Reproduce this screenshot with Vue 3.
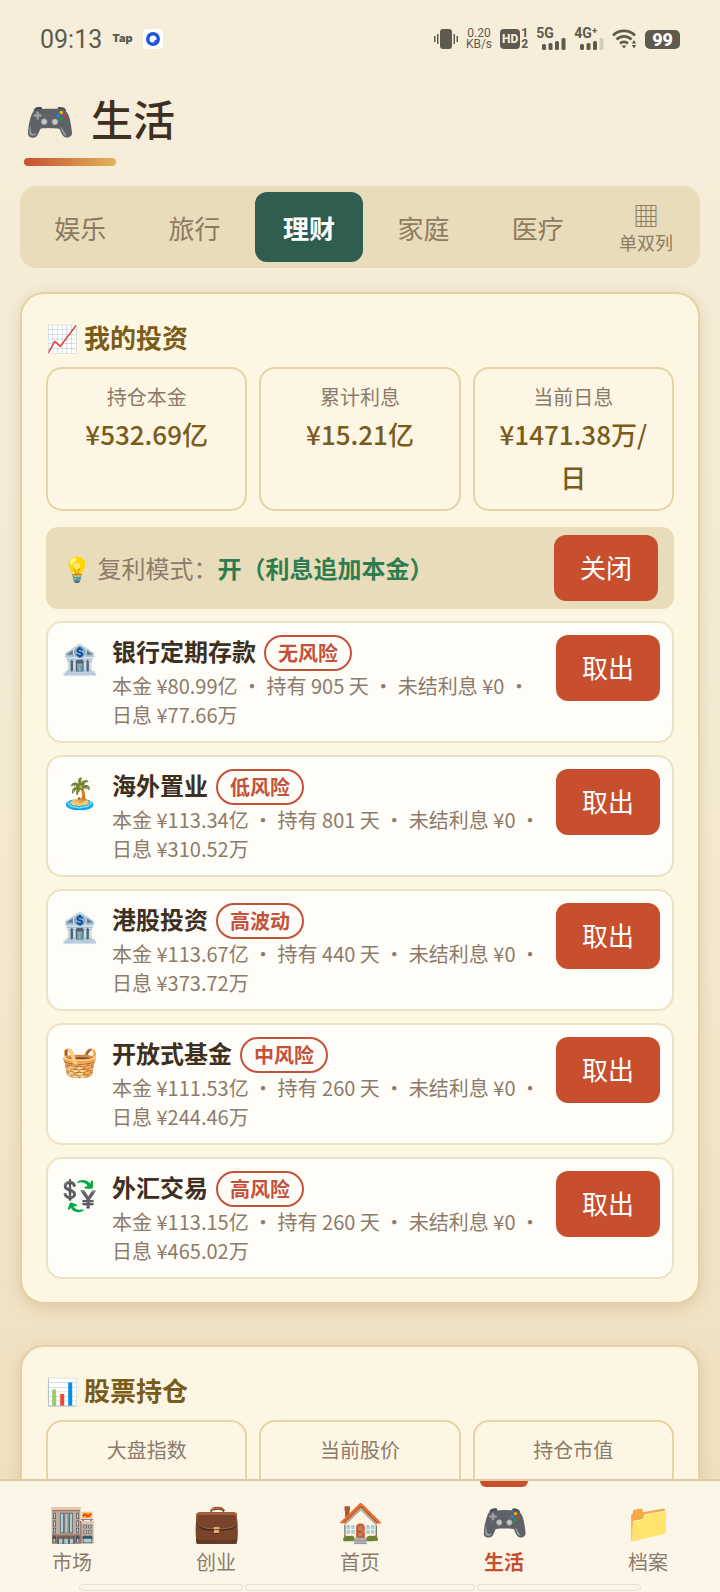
<template>
  <div class="app">
    <header class="status-bar">
      <span class="clock">09:13</span>
      <span class="tap">Tap</span>
      <svg width="20" height="20" viewBox="0 0 20 20">
        <rect width="20" height="20" rx="4" fill="#fff" />
        <circle cx="10" cy="10" r="7" fill="#1f55e0" />
        <path d="M10 6.500a3.500 3.500 0 1 0 0 7c.8 0 1.200-.4 1.200-1.100 0-.8.4-1.200 1.200-1.200.7 0 1.100-.4 1.100-1.200A3.500 3.500 0 0 0 10 6.500z" fill="#fff" />
      </svg>
      <div class="status-right">
        <svg width="24" height="22" viewBox="0 0 24 22" fill="#5e5b4e">
          <rect x="6" y="1" width="12" height="20" rx="3" />
          <rect x="0" y="8" width="1.500" height="6" />
          <rect x="3" y="6" width="1.500" height="10" />
          <rect x="19.500" y="6" width="1.500" height="10" />
          <rect x="22.500" y="8" width="1.500" height="6" />
        </svg>
        <span class="net-speed">0.20<br />KB/s</span>
        <span class="volte">
          <span class="hd">HD</span>
          <span class="hd-nums">1<br />2</span>
        </span>
        <span class="signal">
          <span class="net-type">5G</span>
          <svg width="24" height="12" viewBox="0 0 24 12" fill="#5e5b4e">
            <rect x="0" y="6" width="4" height="6" rx="1.500" />
            <rect x="6.500" y="5" width="4" height="7" rx="1.500" />
            <rect x="13" y="3" width="4" height="9" rx="1.500" />
            <rect x="19.500" y="0" width="4" height="12" rx="1.500" />
          </svg>
        </span>
        <span class="signal">
          <span class="net-type">4G⁺</span>
          <svg width="24" height="12" viewBox="0 0 24 12" fill="#5e5b4e">
            <rect x="0" y="6" width="4" height="6" rx="1.500" />
            <rect x="6.500" y="5" width="4" height="7" rx="1.500" />
            <rect x="13" y="3" width="4" height="9" rx="1.500" />
            <rect x="19.500" y="0" width="4" height="12" rx="1.500" opacity=".2" />
          </svg>
        </span>
        <svg width="25" height="20" viewBox="0 0 25 20" fill="none" stroke="#5e5b4e" stroke-width="2.800">
          <path d="M1 6.500a15.500 15.500 0 0 1 22 0" />
          <path d="M4.500 10.500a10.500 10.500 0 0 1 15 0" />
          <path d="M8 14.500a6 6 0 0 1 8 0" />
          <path d="M9.500 16.500h5l-2.500 3z" fill="#5e5b4e" stroke="none" />
          <path d="M22 11l2.200 3.500h-4.400zM22 19.500l2.200-3.500h-4.400z" fill="#5e5b4e" stroke="none" />
        </svg>
        <span class="battery">99</span>
      </div>
    </header>

    <main class="content">
      <h1 class="page-title"><span class="title-icon">🎮</span>生活</h1>

      <div class="tabs">
        <button
          v-for="tab in tabs"
          :key="tab"
          class="tab"
          :class="{ active: tab === activeTab }"
          @click="activeTab = tab"
        >{{ tab }}</button>
        <button class="tab column-toggle"><span class="grid-icon">▦</span>单双列</button>
      </div>

      <section class="card">
        <h2 class="card-title">📈 我的投资</h2>
        <div class="stats">
          <div v-for="s in investStats" :key="s.label" class="stat">
            <div class="stat-label">{{ s.label }}</div>
            <div class="stat-value">{{ s.value }}</div>
          </div>
        </div>
        <div class="mode">
          <span class="mode-text">💡 复利模式：<strong>{{ compound ? '开（利息追加本金）' : '关' }}</strong></span>
          <button class="btn" @click="compound = !compound">{{ compound ? '关闭' : '开启' }}</button>
        </div>
        <div class="items">
          <div v-for="item in investments" :key="item.name" class="item">
            <span class="item-icon">{{ item.icon }}</span>
            <div class="item-body">
              <div class="item-name">{{ item.name }}<span class="tag">{{ item.risk }}</span></div>
              <div class="item-desc">本金 ¥{{ item.principal }}亿 • 持有 {{ item.days }} 天 • 未结利息 ¥0 • 日息 ¥{{ item.daily }}万</div>
            </div>
            <button class="btn">取出</button>
          </div>
        </div>
      </section>

      <section class="card">
        <h2 class="card-title">📊 股票持仓</h2>
        <div class="stats">
          <div v-for="s in stockStats" :key="s.label" class="stat">
            <div class="stat-label">{{ s.label }}</div>
            <div class="stat-value">{{ s.value }}</div>
          </div>
        </div>
      </section>
    </main>

    <nav class="bottom-nav">
      <button
        v-for="n in navs"
        :key="n.label"
        class="nav-item"
        :class="{ active: n.label === activeNav }"
        @click="activeNav = n.label"
      >
        <span class="nav-icon">{{ n.icon }}</span>
        <span>{{ n.label }}</span>
      </button>
      <div class="gesture-bar"><i></i><i></i><i></i></div>
    </nav>
  </div>
</template>

<script setup>
import { ref } from 'vue'

const tabs = ['娱乐', '旅行', '理财', '家庭', '医疗']
const activeTab = ref('理财')
const activeNav = ref('生活')
const compound = ref(true)

const investStats = [
  { label: '持仓本金', value: '¥532.69亿' },
  { label: '累计利息', value: '¥15.21亿' },
  { label: '当前日息', value: '¥1471.38万/日' }
]

const stockStats = [
  { label: '大盘指数', value: '11888' },
  { label: '当前股价', value: '¥15.88' },
  { label: '持仓市值', value: '¥0' }
]

const investments = [
  { icon: '🏦', name: '银行定期存款', risk: '无风险', principal: '80.99', days: 905, daily: '77.66' },
  { icon: '🏝️', name: '海外置业', risk: '低风险', principal: '113.34', days: 801, daily: '310.52' },
  { icon: '🏦', name: '港股投资', risk: '高波动', principal: '113.67', days: 440, daily: '373.72' },
  { icon: '🧺', name: '开放式基金', risk: '中风险', principal: '111.53', days: 260, daily: '244.46' },
  { icon: '💱', name: '外汇交易', risk: '高风险', principal: '113.15', days: 260, daily: '465.02' }
]

const navs = [
  { icon: '🏬', label: '市场' },
  { icon: '💼', label: '创业' },
  { icon: '🏠', label: '首页' },
  { icon: '🎮', label: '生活' },
  { icon: '📁', label: '档案' }
]
</script>

<style>
body {
  margin: 0;
}
</style>

<style scoped>
.app {
  display: flex;
  flex-direction: column;
  height: 100vh;
  overflow: hidden;
  background: linear-gradient(180deg, #f6eedb 0%, #f4ead2 50%, #eedfbd 100%);
  color: #3d2f22;
  font-family: "Noto Sans CJK SC", "Noto Sans", sans-serif;
}

button {
  border: 0;
  background: none;
  font-family: inherit;
  cursor: pointer;
}

/* 状态栏 */
.status-bar {
  display: flex;
  align-items: center;
  height: 78px;
  padding: 0 40px;
  color: #5e5b4e;
  font-family: Roboto, sans-serif;
}

.clock {
  font-size: 25px;
}

.tap {
  margin: 0 10px 2px;
  font-family: Inter, sans-serif;
  font-size: 11px;
  font-weight: 900;
}

.status-right {
  display: flex;
  align-items: center;
  gap: 8px;
  margin-left: auto;
}

.net-speed {
  font-size: 12px;
  line-height: 11px;
  text-align: center;
}

.volte {
  display: flex;
  align-items: center;
  gap: 1px;
}

.hd {
  padding: 0 2px;
  border-radius: 4px;
  background: #5e5b4e;
  color: #f6eedb;
  font-size: 12px;
  font-weight: 800;
  line-height: 20px;
}

.hd-nums {
  font-size: 12px;
  font-weight: 800;
  line-height: 11px;
}

.signal {
  display: flex;
  flex-direction: column;
  align-items: flex-end;
  width: 30px;
}

.net-type {
  align-self: flex-start;
  font-size: 14px;
  font-weight: 700;
  line-height: 10px;
}

.battery {
  padding: 0 7px;
  border-radius: 5px;
  background: #5e5b4e;
  color: #fff;
  font-size: 18px;
  font-weight: 800;
  line-height: 19px;
}

.content {
  flex: 1;
  min-height: 0;
  overflow: hidden;
  padding: 1px 20px 0;
}

.page-title {
  margin: 0 4px 20px;
  font-size: 42px;
  font-weight: 500;
  line-height: 78px;
}

.title-icon {
  margin: 0 16px 0 1px;
  font-size: 40px;
}

.page-title::after {
  content: "";
  display: block;
  width: 92px;
  height: 8px;
  border-radius: 4px;
  background: linear-gradient(90deg, #c84f2e, #e0b45c);
}

/* 分类标签 */
.tabs {
  display: flex;
  gap: 6px;
  padding: 6px;
  margin-bottom: 24px;
  border-radius: 16px;
  background: #e8dcbb;
}

.tab {
  flex: 1;
  height: 70px;
  padding: 0;
  border-radius: 12px;
  color: #8c7b5f;
  font-size: 26px;
}

.tab.active {
  background: #2f5d50;
  color: #fff;
  font-weight: 700;
}

.column-toggle {
  display: flex;
  flex: 0 0 96px;
  flex-direction: column;
  align-items: center;
  justify-content: center;
  padding: 2px 0 0;
  font-size: 18px;
  line-height: 26px;
}

.grid-icon {
  font-size: 26px;
  line-height: 28px;
}

/* 卡片 */
.card {
  padding: 24px 24px 23px;
  margin-bottom: 41px;
  border: 2px solid #e6cfa0;
  border-radius: 24px;
  background: #fdf6e3;
  box-shadow: 0 4px 16px rgba(139, 101, 40, 0.2);
}

.card-title {
  margin: 0 0 12px;
  color: #7a5c1a;
  font-size: 26px;
  line-height: 37px;
}

.stats {
  display: grid;
  grid-template-columns: repeat(3, 1fr);
  gap: 12px;
}

.stat {
  padding: 13px 20px 11px;
  border: 2px solid #e6d3a3;
  border-radius: 16px;
  background: #fef6e4;
  text-align: center;
}

.stat-label {
  color: #8c7b6b;
  font-size: 20px;
  line-height: 30px;
}

.stat-value {
  color: #7a5c1a;
  font-size: 26px;
  font-weight: 500;
  line-height: 43px;
}

.mode {
  display: flex;
  align-items: center;
  justify-content: space-between;
  padding: 8px 16px;
  margin: 16px 0 12px;
  border-radius: 12px;
  background: #e8dcbb;
  color: #8c7b6b;
  font-size: 24px;
}

.mode-text {
  padding-bottom: 2px;
}

.mode strong {
  color: #2e7d4f;
}

.btn {
  flex: none;
  width: 104px;
  height: 66px;
  padding: 0 0 3px;
  border-radius: 12px;
  background: #c84f2e;
  color: #fff;
  font-size: 26px;
}

.items {
  display: flex;
  flex-direction: column;
  gap: 12px;
}

.item {
  display: flex;
  align-items: flex-start;
  gap: 12px;
  padding: 12px;
  border: 2px solid #ebe2c4;
  border-radius: 16px;
  background: #fffdf7;
}

.item-icon {
  width: 38px;
  margin-right: 2px;
  font-size: 30px;
  text-align: center;
}

.item-body {
  flex: 1;
}

.item-name {
  display: flex;
  align-items: flex-start;
  gap: 8px;
  font-size: 24px;
  font-weight: 700;
  line-height: 32px;
}

.tag {
  padding: 0 12px;
  border: 2px solid #c4523a;
  border-radius: 18px;
  color: #c4523a;
  font-size: 20px;
}

.item-desc {
  color: #8c7b6b;
  font-size: 20px;
  line-height: 29px;
}

/* 底部导航 */
.bottom-nav {
  position: relative;
  display: flex;
  height: 111px;
  border-top: 2px solid #dccba4;
  background: #fcf6e8;
}

.nav-item {
  position: relative;
  display: flex;
  flex: 1;
  flex-direction: column;
  align-items: center;
  padding: 11px 0 0;
  color: #8c7b6b;
  font-size: 20px;
}

.nav-icon {
  font-size: 38px;
}

.nav-item.active {
  color: #c84f2e;
  font-weight: 700;
}

.nav-item.active::before {
  content: "";
  position: absolute;
  top: 0;
  width: 48px;
  height: 6px;
  border-radius: 0 0 6px 6px;
  background: #c84f2e;
}

.gesture-bar {
  position: absolute;
  right: 11%;
  bottom: 1px;
  left: 11%;
  display: flex;
  gap: 2px;
}

.gesture-bar i {
  flex: 1;
  height: 5px;
  border: 1px solid #e6dfd0;
  border-radius: 4px;
}

.gesture-bar i:nth-child(2) {
  flex: 1.4;
}
</style>
